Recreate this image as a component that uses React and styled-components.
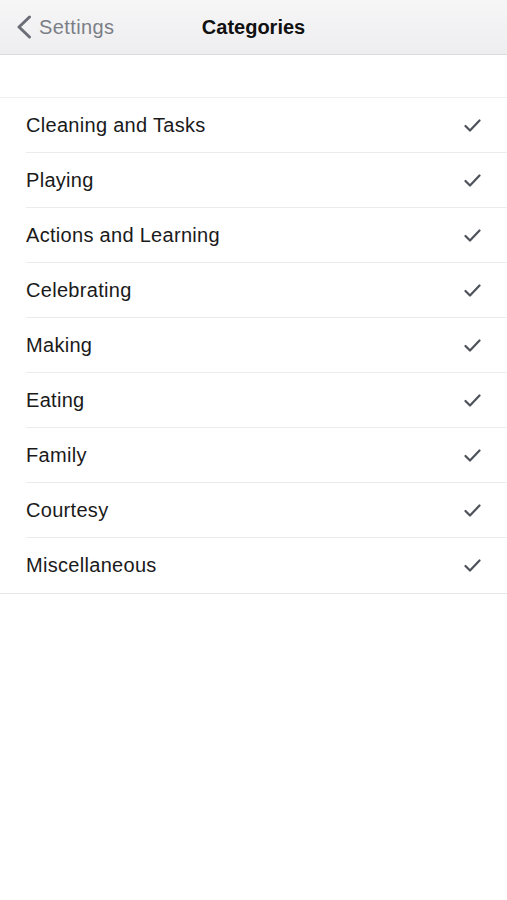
import React from "react";
import styled, { createGlobalStyle } from "styled-components";

const Global = createGlobalStyle`
  html, body { margin: 0; padding: 0; background: #ffffff; }
  body { font-family: "Liberation Sans", Arial, sans-serif; -webkit-font-smoothing: antialiased; }
`;

const Page = styled.div`
  width: 507px;
  min-height: 900px;
  background: #ffffff;
  display: flex;
  flex-direction: column;
`;

const NavBar = styled.header`
  height: 54px;
  border-bottom: 1px solid #dcdcde;
  background: linear-gradient(#f6f6f7, #eeeef0);
  display: grid;
  grid-template-columns: 1fr auto 1fr;
  align-items: center;
`;

const BackButton = styled.div`
  display: flex;
  align-items: center;
  gap: 7px;
  padding-left: 16px;
  color: #7b7e86;
  font-size: 20px;
  letter-spacing: 0.4px;
  font-family: "Liberation Sans", Arial, sans-serif;
`;

const Title = styled.div`
  font-family: "Liberation Sans", Arial, sans-serif;
  font-weight: 700;
  font-size: 20px;
  color: #111111;
`;

const Spacer = styled.div`
  height: 42px;
`;

const List = styled.ul`
  list-style: none;
  margin: 0;
  padding: 0;
  border-top: 1px solid #efeff0;
  border-bottom: 1px solid #e6e6e8;
`;

const Row = styled.li`
  height: 55px;
  padding-left: 26px;
  display: flex;
  align-items: stretch;
`;

const RowInner = styled.div`
  flex: 1;
  display: flex;
  align-items: center;
  justify-content: space-between;
  padding-right: 26px;
  border-bottom: ${(p) => (p.$last ? "none" : "1px solid #ececee")};
`;

const Label = styled.span`
  font-family: "Liberation Sans", Arial, sans-serif;
  font-size: 20px;
  letter-spacing: 0.3px;
  color: #1a1a1a;
`;

const Check = () => (
  <svg width="17" height="13" viewBox="0 0 17 13" fill="none">
    <path d="M1.5 7 L6 11.5 L15.5 1.5" stroke="#4e525a" strokeWidth="2.2" strokeLinecap="round" strokeLinejoin="round" />
  </svg>
);

const Chevron = () => (
  <svg width="16" height="24" viewBox="0 0 16 24" fill="none">
    <path d="M13.5 2 L3 12 L13.5 22" stroke="#6b6e77" strokeWidth="3" strokeLinecap="round" strokeLinejoin="round" />
  </svg>
);

const items = [
  "Cleaning and Tasks",
  "Playing",
  "Actions and Learning",
  "Celebrating",
  "Making",
  "Eating",
  "Family",
  "Courtesy",
  "Miscellaneous",
];

export default function App() {
  return (
    <Page>
      <Global />
      <NavBar>
        <BackButton>
          <Chevron />
          <span>Settings</span>
        </BackButton>
        <Title>Categories</Title>
        <div />
      </NavBar>
      <Spacer />
      <List>
        {items.map((it, i) => (
          <Row key={it}>
            <RowInner $last={i === items.length - 1}>
              <Label>{it}</Label>
              <Check />
            </RowInner>
          </Row>
        ))}
      </List>
    </Page>
  );
}
